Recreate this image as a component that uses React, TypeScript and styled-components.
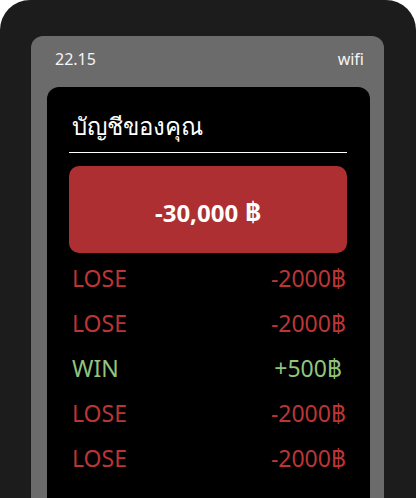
import React from "react";
import styled, { createGlobalStyle } from "styled-components";

const Global = createGlobalStyle`
  html, body { margin: 0; padding: 0; background: #ffffff; }
  body { font-family: "Noto Sans", "Open Sans", sans-serif; }
  * { box-sizing: border-box; }
`;

const Frame = styled.div`
  width: 416px;
  height: 498px;
  overflow: hidden;
  background: #1c1c1c;
  border-radius: 30px 30px 0 0;
  padding: 36px 32px 0 31px;
`;

const Screen = styled.div`
  height: 100%;
  background: #6b6b6b;
  border-radius: 12px 12px 0 0;
  padding: 0 14px 0 16px;
  display: flex;
  flex-direction: column;
`;

const StatusBar = styled.div`
  height: 51px;
  display: flex;
  align-items: center;
  justify-content: space-between;
  padding: 0 6px 6px 8px;
  color: #f4f4f4;
  font-size: 16px;
`;

const Card = styled.div`
  flex: 1;
  background: #000;
  border-radius: 12px 12px 0 0;
  padding: 0 23px 0 22px;
  display: flex;
  flex-direction: column;
`;

const Title = styled.div`
  color: #fff;
  font-size: 24px;
  line-height: 34px;
  padding: 22px 0 9px 3px;
  border-bottom: 1px solid #fff;
`;

const Balance = styled.div`
  margin-top: 13px;
  height: 87px;
  border-radius: 10px;
  background: #ad2f31;
  color: #fff;
  font-weight: 700;
  font-size: 24px;
  display: flex;
  align-items: center;
  justify-content: center;
  gap: 7px;
  padding-top: 5px;
`;

const Baht = styled.span`
  font-family: Inter, "DejaVu Sans", sans-serif;
`;

const Rows = styled.div`
  margin-top: 2px;
  display: flex;
  flex-direction: column;
`;

const Row = styled.div<{ $win?: boolean }>`
  height: 45px;
  display: flex;
  align-items: center;
  justify-content: space-between;
  padding: 0 1px 0 3px;
  font-size: 23px;
  color: ${(p) => (p.$win ? "#93c47d" : "#bc3535")};
`;

const Amount = styled.span<{ $win?: boolean }>`
  padding-right: ${(p) => (p.$win ? "4px" : "0")};
`;

const rows = [
  { win: false, amount: "-2000" },
  { win: false, amount: "-2000" },
  { win: true, amount: "+500" },
  { win: false, amount: "-2000" },
  { win: false, amount: "-2000" },
];

export default function App() {
  return (
    <>
      <Global />
      <Frame>
        <Screen>
          <StatusBar>
            <span>22.15</span>
            <span>wifi</span>
          </StatusBar>
          <Card>
            <Title>บัญชีของคุณ</Title>
            <Balance>
              <span>-30,000</span>
              <Baht>฿</Baht>
            </Balance>
            <Rows>
              {rows.map((r, i) => (
                <Row key={i} $win={r.win}>
                  <span>{r.win ? "WIN" : "LOSE"}</span>
                  <Amount $win={r.win}>
                    {r.amount}
                    <Baht>฿</Baht>
                  </Amount>
                </Row>
              ))}
            </Rows>
          </Card>
        </Screen>
      </Frame>
    </>
  );
}
